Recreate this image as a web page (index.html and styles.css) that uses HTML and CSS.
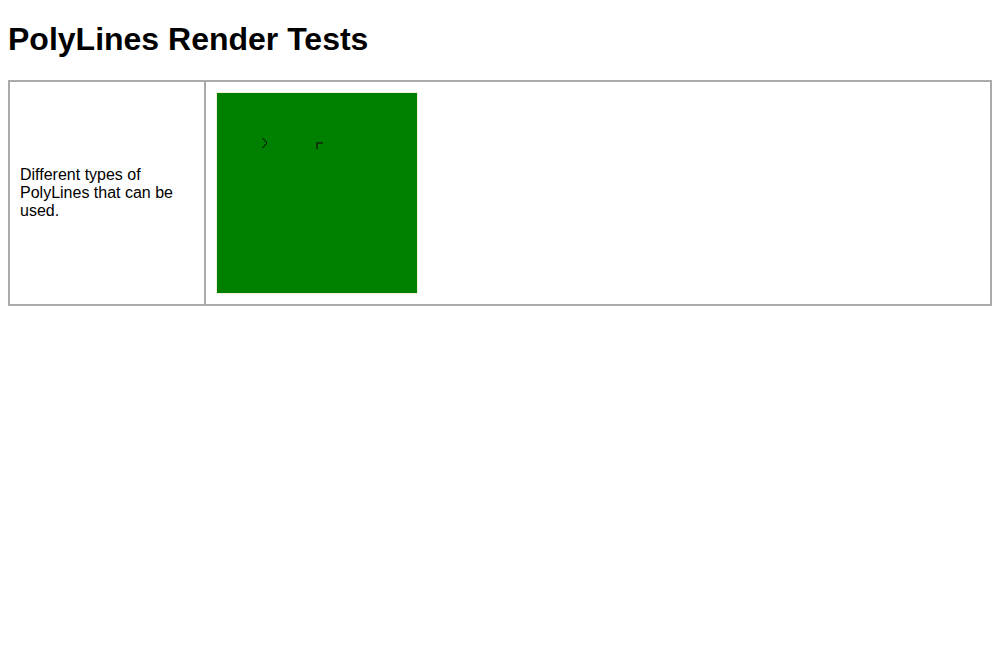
FILE: index.html
```html
<!DOCTYPE html>
<html>
<head>
<meta charset="utf-8">
<title>PolyLines Render Tests</title>
<link rel="stylesheet" href="styles.css">
</head>
<body>
<h1 class="title">PolyLines Render Tests</h1>
<table class="tests">
  <tr>
    <td class="desc">Different types of PolyLines that can be used.</td>
    <td class="render">
      <svg class="canvas" width="200" height="200" viewBox="0 0 200 200">
        <rect x="0" y="0" width="200" height="200" fill="#008000"/>
        <polyline points="45.5,45 50,50 45.5,55" fill="none" stroke="#000" stroke-width="1"/>
        <polyline points="100,56 100,50 106,50" fill="none" stroke="#0b3d0b" stroke-width="2"/>
      </svg>
    </td>
  </tr>
</table>
</body>
</html>
```
FILE: styles.css
```css
html {
  margin: 0;
  padding: 0;
}
body {
  margin: 0;
  padding: 8px;
  font-family: "Liberation Sans", Arial, sans-serif;
  color: #000;
  background: #fff;
}
.title {
  font-size: 32px;
  line-height: 37px;
  font-weight: bold;
  margin: 13.44px 0 21.44px;
}
.tests {
  width: 100%;
  border-collapse: collapse;
  border: 2px solid #aaa;
}
.tests td {
  border: 2px solid #aaa;
  padding: 10px;
  vertical-align: middle;
  font-size: 16px;
  line-height: 18px;
}
.desc {
  width: 174px;
}
.canvas {
  display: block;
  border: 1px solid #f3f3dc;
}
```
